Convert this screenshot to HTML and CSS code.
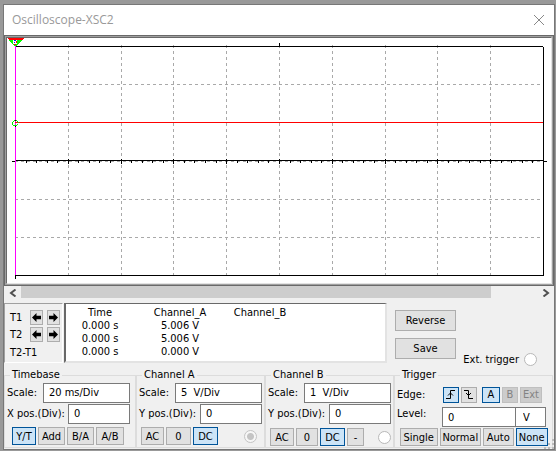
FILE: index.html
```html
<!DOCTYPE html>
<html lang="en">
<head>
<meta charset="utf-8">
<title>Oscilloscope-XSC2</title>
<link rel="stylesheet" href="styles.css">
</head>
<body>
<main class="window">
  <header class="titlebar">
    <h1 class="title">Oscilloscope-XSC2</h1>
    <button class="close" aria-label="Close"><svg width="10" height="10" viewBox="0 0 10 10"><path d="M0 0L10 10M10 0L0 10" fill="none" stroke="#888"/></svg></button>
  </header>

  <section class="scope" aria-label="Display">
    <svg class="trace" viewBox="7 38 544 245" preserveAspectRatio="none" shape-rendering="crispEdges">
      <path d="M68.5 45V275M121.5 45V275M173.5 45V275M226.5 45V275M279.5 45V275M332.5 45V275M385.5 45V275M437.5 45V275M490.5 45V275M15 84.500H543M15 161.500H543M15 199.500H543M15 237.500H543" fill="none" stroke="#a9a9a9" stroke-dasharray="3 3"/>
      <path d="M15 46.500H543M543.500 47V276M15 275.500H543M15 160.500H543M12 161.500H15M543 161.500H547M15.500 275V279M279.500 43V47" fill="none" stroke="#000"/>
      <path d="M26.500 161V163M36.500 161V163M47.500 161V163M57.500 161V163M78.500 161V163M89.500 161V163M99.500 161V163M110.500 161V163M131.500 161V163M142.500 161V163M152.500 161V163M163.500 161V163M184.500 161V163M194.500 161V163M205.500 161V163M216.500 161V163M237.500 161V163M247.500 161V163M258.500 161V163M268.500 161V163M290.500 161V163M300.500 161V163M311.500 161V163M321.500 161V163M342.500 161V163M353.500 161V163M363.500 161V163M374.500 161V163M395.500 161V163M406.500 161V163M416.500 161V163M427.500 161V163M448.500 161V163M458.500 161V163M469.500 161V163M480.500 161V163M501.500 161V163M511.500 161V163M522.500 161V163M532.500 161V163" stroke="#000"/>
      <path d="M68.5 159V164M121.5 159V164M173.5 159V164M226.5 159V164M279.5 159V164M332.5 159V164M385.5 159V164M437.5 159V164M490.5 159V164" stroke="#000"/>
      <path d="M15.500 46V275" stroke="#f0f"/>
      <path d="M15 122.500H543" stroke="#f00"/>
      <path d="M14 120h3v1h-3zM13 121h1v1h-1zM17 121h1v1h-1zM12 122h1v3h-1zM18 122h1v1h-1zM17 124h1v1h-1zM13 125h1v1h-1zM14 125h3v1h-3z" fill="#0e0"/>
      <path d="M15 120h1v1h-1zM15 126h1v1h-1z"/>
      <path d="M7 38H24L22 40H9z" fill="#f00"/>
      <path d="M9 40H22L17 46H14z" fill="#0f0"/>
      <path d="M13 40h4v4h-1v1h-2v-1h-1z" fill="#fff"/>
      <path d="M14 40h2v1h-2zM14 42h1v1h-1z" fill="#00f"/>
      <path d="M16 41h1v2h-1zM14 44h2v1h-2z" fill="#f00"/>
    </svg>
  </section>

  <div class="scroller">
    <button class="arrow" aria-label="Scroll left"><svg width="8" height="8" viewBox="0 0 8 8"><path d="M6.500 .5L2 4L6.500 7.500" fill="none" stroke="#505050" stroke-width="2"/></svg></button>
    <div class="track"><div class="thumb"></div></div>
    <button class="arrow" aria-label="Scroll right"><svg width="8" height="8" viewBox="0 0 8 8"><path d="M1.500 .5L6 4L1.500 7.500" fill="none" stroke="#505050" stroke-width="2"/></svg></button>
  </div>

  <section class="readout">
    <div class="cursors">
      <span>T1</span>
      <button class="btn step" aria-label="T1 left"><svg width="9" height="9" viewBox="0 0 10 10"><path d="M0 5L5 0V3H10V7H5V10z"/></svg></button>
      <button class="btn step" aria-label="T1 right"><svg width="9" height="9" viewBox="0 0 10 10"><path d="M10 5L5 0V3H0V7H5V10z"/></svg></button>
      <span>T2</span>
      <button class="btn step" aria-label="T2 left"><svg width="9" height="9" viewBox="0 0 10 10"><path d="M0 5L5 0V3H10V7H5V10z"/></svg></button>
      <button class="btn step" aria-label="T2 right"><svg width="9" height="9" viewBox="0 0 10 10"><path d="M10 5L5 0V3H0V7H5V10z"/></svg></button>
      <span class="delta">T2-T1</span>
    </div>
    <div class="values">
      <table>
        <thead><tr><th class="c-time">Time</th><th class="c-a">Channel_A</th><th class="c-b">Channel_B</th></tr></thead>
        <tbody>
          <tr><td>0.000 s</td><td>5.006 V</td><td></td></tr>
          <tr><td>0.000 s</td><td>5.006 V</td><td></td></tr>
          <tr><td>0.000 s</td><td>0.000 V</td><td></td></tr>
        </tbody>
      </table>
    </div>
    <div class="actions">
      <button class="btn wide">Reverse</button>
      <button class="btn wide">Save</button>
    </div>
    <label class="ext">Ext. trigger <input class="radio" type="radio" name="ext"></label>
  </section>

  <section class="groups">
    <fieldset class="group timebase">
      <legend>Timebase</legend>
      <div class="field"><label for="tb-scale">Scale:</label><input id="tb-scale" class="box scale" value="20 ms/Div"></div>
      <div class="field"><label for="tb-pos">X pos.(Div):</label><input id="tb-pos" class="box pos" value="0"></div>
      <div class="buttons">
        <button class="btn on">Y/T</button><button class="btn">Add</button><button class="btn">B/A</button><button class="btn">A/B</button>
      </div>
    </fieldset>
    <fieldset class="group channel-a">
      <legend>Channel A</legend>
      <div class="field"><label for="a-scale">Scale:</label><input id="a-scale" class="box scale" value="5  V/Div"></div>
      <div class="field"><label for="a-pos">Y pos.(Div):</label><input id="a-pos" class="box pos" value="0"></div>
      <div class="buttons">
        <button class="btn">AC</button><button class="btn">0</button><button class="btn on">DC</button>
        <input class="radio" type="radio" name="probe-a" aria-label="Channel A terminal" checked disabled>
      </div>
    </fieldset>
    <fieldset class="group channel-b">
      <legend>Channel B</legend>
      <div class="field"><label for="b-scale">Scale:</label><input id="b-scale" class="box scale" value="1  V/Div"></div>
      <div class="field"><label for="b-pos">Y pos.(Div):</label><input id="b-pos" class="box pos" value="0"></div>
      <div class="buttons">
        <button class="btn">AC</button><button class="btn">0</button><button class="btn on">DC</button><button class="btn">-</button>
        <input class="radio" type="radio" name="probe-b" aria-label="Channel B terminal">
      </div>
    </fieldset>
    <fieldset class="group trigger">
      <legend>Trigger</legend>
      <div class="edge">
        <span>Edge:</span>
        <button class="btn on" aria-label="Rising edge"><svg width="10" height="11" viewBox="0 0 10 11"><path d="M0 9.500H4.500V1.500H9M2 6.500L4.500 4L7 6.500" fill="none" stroke="#000"/></svg></button>
        <button class="btn" aria-label="Falling edge"><svg width="10" height="11" viewBox="0 0 10 11"><path d="M0 1.500H4.500V9.500H9M2 4L4.500 6.500L7 4" fill="none" stroke="#000"/></svg></button>
        <button class="btn on src">A</button><button class="btn" disabled>B</button><button class="btn" disabled>Ext</button>
      </div>
      <div class="level"><label for="level">Level:</label><input id="level" class="box" value="0"><input class="box unit" value="V" aria-label="Level unit"></div>
      <div class="buttons">
        <button class="btn">Single</button><button class="btn">Normal</button><button class="btn">Auto</button><button class="btn on">None</button>
      </div>
    </fieldset>
  </section>
  <svg class="grip" width="10" height="10" viewBox="0 0 10 10" shape-rendering="crispEdges"><path d="M8 0h2v2h-2zM4 4h2v2h-2zM8 4h2v2h-2zM0 8h2v2h-2zM4 8h2v2h-2zM8 8h2v2h-2z" fill="#bcbcbc"/></svg>
</main>
</body>
</html>
```
FILE: styles.css
```css
* { box-sizing: border-box; }

body {
  margin: 0;
  padding: 4px 1px 2px 3px;
  background: #999;
  color: #000;
  font: 11px/13px "DejaVu Sans Condensed", "DejaVu Sans", sans-serif;
}

button, input { font: inherit; color: inherit; margin: 0; padding: 0; }

.window {
  position: relative;
  border: 1px solid #777;
  background: #f0f0f0;
}

.titlebar {
  display: flex;
  align-items: center;
  justify-content: space-between;
  height: 30px;
  padding: 0 10px 0 8px;
  background: #fff;
}

.title {
  margin: 0;
  color: #999;
  font: 12px/16px "Open Sans", sans-serif;
}

.close {
  display: flex;
  border: 0;
  background: none;
}

.scope {
  padding: 1px;
  border: 1px solid #696969;
  background: #a0a0a0;
}

.trace {
  display: block;
  width: 100%;
  height: 247px;
  border: 1px solid #696969;
  border-right-color: #e3e3e3;
  border-bottom-color: #e3e3e3;
  background: #fff;
}

.scroller { display: flex; height: 13px; }

.arrow {
  display: flex;
  align-items: center;
  justify-content: center;
  width: 17px;
  border: 0;
  background: none;
}

.track { flex: 1; padding-bottom: 1px; }
.thumb { width: 91%; height: 100%; background: #cdcdcd; }

.readout {
  display: flex;
  margin-top: 4px;
  height: 60px;
}

.cursors {
  display: grid;
  grid-template: 17px 17px 1fr / 16px 13px 13px;
  column-gap: 4px;
  align-items: center;
  width: 59px;
  padding: 5px 0 1px 5px;
  border: 1px solid #a0a0a0;
  border-right-color: #fff;
  border-bottom-color: #fff;
  white-space: nowrap;
}

.delta { grid-column: 1 / -1; }

.btn {
  display: flex;
  align-items: center;
  justify-content: center;
  border: 1px solid #adadad;
  background: #e1e1e1;
  line-height: 13px;
  white-space: nowrap;
}

.btn:disabled { border-color: #bfbfbf; background: #ccc; color: #838383; }
.on { border-color: #005499; background: #cce4f7; }
.step { height: 15px; }

.values {
  width: 323px;
  margin-left: 1px;
  border: 2px solid #696969;
  border-right-color: #e3e3e3;
  border-bottom-color: #e3e3e3;
  border-top-width: 1px;
  background: #fff;
}

table { border-collapse: collapse; margin-top: 2px; }
th, td { height: 13px; padding: 0; font-weight: normal; text-align: center; }
.c-time { width: 68px; }
.c-a { width: 92px; }
.c-b { width: 68px; }

.actions {
  display: flex;
  flex-direction: column;
  gap: 7px;
  padding: 7px 0 0 8px;
}

.wide { width: 61px; height: 21px; }

.ext {
  display: flex;
  align-items: center;
  gap: 5px;
  align-self: flex-end;
  margin: 0 17px 0 auto;
  height: 8px;
  white-space: nowrap;
}

.radio {
  appearance: none;
  flex: none;
  width: 13px;
  height: 13px;
  border: 1px solid #b8b8b8;
  border-radius: 50%;
  background: #fff;
}

.radio:checked {
  border-color: #c4c4c4;
  background: radial-gradient(circle, #c4c4c4 3px, #f6f6f6 4px);
}

.groups {
  display: grid;
  grid-template-columns: 132fr 129fr 129fr 159fr;
  margin-top: 6px;
  padding: 0 1px 1px 0;
}

.group {
  min-width: 0;
  margin: 0;
  padding: 1px 2px 0 2px;
  border: 1px solid #dcdcdc;
}

.group legend { margin-left: 3px; padding: 0 2px; line-height: 12px; }

.field {
  display: flex;
  align-items: center;
  justify-content: space-between;
  height: 21px;
  white-space: nowrap;
}

.box {
  height: 20px;
  min-width: 0;
  padding: 0 5px;
  border: 1px solid #7a7a7a;
  border-radius: 0;
  background: #fff;
}

.scale { width: 87px; }
.pos { width: 62px; }

.buttons {
  display: grid;
  gap: 2px;
  align-items: center;
  height: 22px;
  padding-top: 2px;
}

.buttons .btn { height: 18px; }
.buttons .radio { justify-self: end; }
.timebase { padding-right: 5px; }
.timebase .buttons { grid-template-columns: 24px 27px 27px 28px; padding-left: 5px; }
.channel-a .buttons { grid-template-columns: 23px 25px 25px 1fr; padding-left: 2px; padding-right: 5px; }
.channel-b .buttons { grid-template-columns: 24px 22px 25px 17px 1fr; padding-left: 2px; padding-top: 4px; }
.trigger { padding-right: 4px; }
.trigger .buttons { grid-template-columns: 37fr 41fr 30fr 32fr; padding-left: 3px; height: 20px; padding-top: 0; }

.edge {
  display: grid;
  grid-template-columns: 44px 16px 16px 21px 16px 22px;
  gap: 2px;
  align-items: center;
  height: 25px;
}

.edge .btn { height: 16px; }
.src { margin-left: 3px; }

.level {
  display: grid;
  grid-template-columns: 45px 1fr 30px;
  align-items: start;
  height: 20px;
  padding-right: 2px;
}

.unit { margin-left: -1px; padding-left: 7px; }

.grip { position: absolute; right: 0; bottom: 0; }
```
